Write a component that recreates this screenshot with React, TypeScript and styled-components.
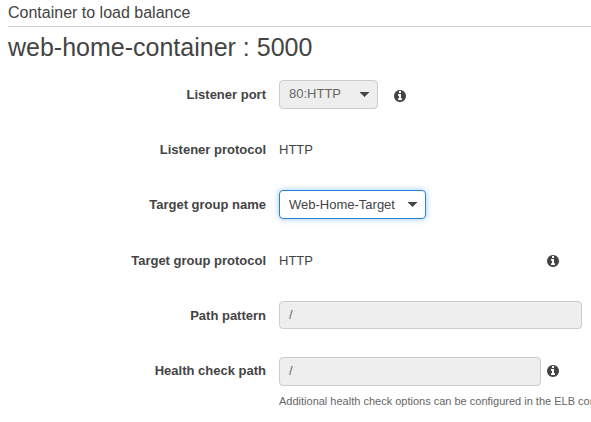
import React from "react";
import styled, { createGlobalStyle } from "styled-components";

const GlobalStyle = createGlobalStyle`
  body {
    margin: 0;
    background: #fff;
    color: #444;
    font: 13px/15px "Liberation Sans", Arial, sans-serif;
    overflow: hidden;
  }
`;

const Page = styled.main`
  height: 422px;
  padding-left: 8px;
  box-sizing: border-box;
  overflow: hidden;
`;

const SectionHeading = styled.h2`
  box-sizing: border-box;
  margin: 0;
  height: 27px;
  padding-top: 1px;
  border-bottom: 1px solid #ccc;
  font-size: 16px;
  font-weight: 400;
  line-height: 24px;
`;

const ContainerTitle = styled.h1`
  margin: 0 0 12px;
  height: 41px;
  font-size: 25px;
  font-weight: 400;
  line-height: 41px;
`;

const Row = styled.div<{ $gap?: number }>`
  display: grid;
  grid-template-columns: 258px 1fr;
  column-gap: 13px;
  align-items: center;
  height: 29px;
  margin-bottom: ${(p) => p.$gap ?? 26}px;
`;

const Label = styled.label<{ $raised?: boolean }>`
  padding-bottom: ${(p) => (p.$raised ? 2 : 0)}px;
  font-weight: 700;
  text-align: right;
`;

const Controls = styled.div<{ $align?: string }>`
  display: flex;
  align-items: ${(p) => p.$align ?? "center"};
  height: 29px;
`;

const Value = styled.span<{ $width?: number }>`
  width: ${(p) => (p.$width ? `${p.$width}px` : "auto")};
`;

const Select = styled.button<{ $width: number; $disabled?: boolean }>`
  display: flex;
  align-items: center;
  justify-content: space-between;
  box-sizing: border-box;
  width: ${(p) => p.$width}px;
  height: 29px;
  margin: 0;
  padding: ${(p) => (p.$disabled ? "0 8px 2px 9px" : "0 8px 0 9px")};
  border: 1px solid ${(p) => (p.$disabled ? "#ccc" : "#2a7fdc")};
  border-radius: 4px;
  background: ${(p) => (p.$disabled ? "#eee" : "#fff")};
  box-shadow: ${(p) => (p.$disabled ? "none" : "0 0 6px rgba(60, 145, 235, 0.5)")};
  color: ${(p) => (p.$disabled ? "#666" : "#444")};
  font: inherit;
`;

const Caret = styled.span<{ $drop?: number }>`
  width: 9px;
  height: 5px;
  margin-top: ${(p) => p.$drop ?? 0}px;
  background: #444;
  clip-path: polygon(0 0, 100% 0, 100% 10%, 50% 100%, 0 10%);
`;

const TextInput = styled.input<{ $width: number; $height: number }>`
  box-sizing: border-box;
  width: ${(p) => p.$width}px;
  height: ${(p) => p.$height}px;
  padding: 0 9px ${(p) => p.$height - 27}px;
  border: 1px solid #ccc;
  border-radius: 4px;
  background: #eee;
  color: #666;
  font: inherit;
`;

const Icon = styled.svg<{ $left: number; $top?: number }>`
  flex: none;
  width: 12px;
  height: 12px;
  margin-left: ${(p) => p.$left}px;
  margin-top: ${(p) => p.$top ?? 0}px;
  fill: #444;
`;

const Hint = styled.p`
  margin: 9px 0 0 271px;
  color: #666;
  font-size: 11px;
  line-height: 13px;
  white-space: nowrap;
`;

function InfoIcon({ left, top }: { left: number; top?: number }) {
  return (
    <Icon $left={left} $top={top} viewBox="0 128 1536 1536" aria-label="Information">
      <path d="M1024 1376v-160q0-14-9-23t-23-9h-96v-512q0-14-9-23t-23-9h-320q-14 0-23 9t-9 23v160q0 14 9 23t23 9h96v320h-96q-14 0-23 9t-9 23v160q0 14 9 23t23 9h448q14 0 23-9t9-23zm-128-896v-192q0-14-9-23t-23-9h-192q-14 0-23 9t-9 23v192q0 14 9 23t23 9h192q14 0 23-9t9-23zm640 416q0 209-103 385.500t-279.500 279.500-385.500 103-385.500-103-279.500-279.500-103-385.500 103-385.500 279.500-279.500 385.500-103 385.500 103 279.500 279.500 103 385.500z" />
    </Icon>
  );
}

export default function App() {
  return (
    <>
      <GlobalStyle />
      <Page>
        <SectionHeading>Container to load balance</SectionHeading>
        <ContainerTitle>web-home-container : 5000</ContainerTitle>
        <Row>
          <Label>Listener port</Label>
          <Controls>
            <Select $width={99} $disabled type="button">
              80:HTTP
              <Caret $drop={2} />
            </Select>
            <InfoIcon left={16} top={3} />
          </Controls>
        </Row>
        <Row>
          <Label>Listener protocol</Label>
          <Controls>
            <Value>HTTP</Value>
          </Controls>
        </Row>
        <Row $gap={27}>
          <Label>Target group name</Label>
          <Controls>
            <Select $width={147} type="button">
              Web-Home-Target
              <Caret />
            </Select>
          </Controls>
        </Row>
        <Row>
          <Label>Target group protocol</Label>
          <Controls>
            <Value $width={262}>HTTP</Value>
            <InfoIcon left={6} />
          </Controls>
        </Row>
        <Row $gap={27}>
          <Label>Path pattern</Label>
          <Controls $align="flex-start">
            <TextInput $width={303} $height={28} defaultValue="/" readOnly />
          </Controls>
        </Row>
        <Row $gap={0}>
          <Label $raised>Health check path</Label>
          <Controls>
            <TextInput $width={262} $height={29} defaultValue="/" readOnly />
            <InfoIcon left={6} top={-1} />
          </Controls>
        </Row>
        <Hint>Additional health check options can be configured in the ELB console</Hint>
      </Page>
    </>
  );
}
